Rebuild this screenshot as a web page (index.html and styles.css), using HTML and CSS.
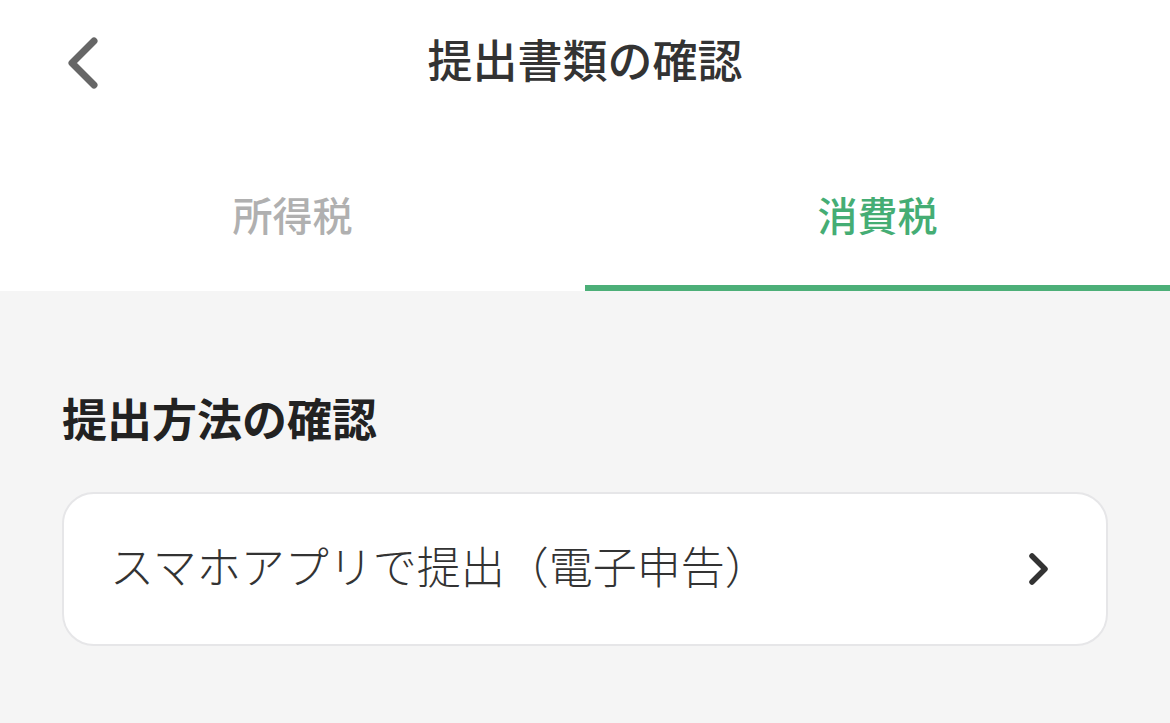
FILE: index.html
```html
<!DOCTYPE html>
<html lang="ja">
<head>
<meta charset="utf-8">
<link rel="stylesheet" href="styles.css">
</head>
<body>
<div class="page">
  <header class="topbar">
    <button class="back" aria-label="戻る">
      <svg width="40" height="60" viewBox="0 0 40 60"><path d="M30 8 L8 30 L30 52" fill="none" stroke="#666" stroke-width="7" stroke-linecap="round" stroke-linejoin="round"/></svg>
    </button>
    <h1 class="title">提出書類の確認</h1>
  </header>
  <nav class="tabs">
    <div class="tab">所得税</div>
    <div class="tab active">消費税</div>
  </nav>
  <main class="content">
    <h2 class="section-title">提出方法の確認</h2>
    <div class="card">
      <span class="card-text">スマホアプリで提出（電子申告）</span>
      <svg class="chev" width="24" height="36" viewBox="0 0 24 36"><path d="M5 5 L18 18 L5 31" fill="none" stroke="#333" stroke-width="5.5" stroke-linecap="round" stroke-linejoin="round"/></svg>
    </div>
  </main>
</div>
</body>
</html>
```
FILE: styles.css
```css
* { box-sizing: border-box; }
html, body { margin: 0; padding: 0; }
body {
  font-family: "Noto Sans CJK JP", "Noto Sans", sans-serif;
  background: #f5f5f5;
  width: 1170px;
  height: 723px;
  overflow: hidden;
}
.page { display: flex; flex-direction: column; height: 723px; }
.topbar {
  height: 122px;
  background: #fff;
  display: flex;
  align-items: center;
  justify-content: center;
  position: relative;
}
.back {
  position: absolute;
  left: 64px;
  top: 33px;
  border: 0;
  background: none;
  padding: 0;
  width: 40px;
  height: 60px;
}
.back svg { display: block; }
.title {
  margin: 0;
  margin-top: -6px;
  font-size: 45px;
  font-weight: 500;
  color: #333;
  letter-spacing: 0;
}
.tabs {
  display: flex;
  background: #fff;
  height: 169px;
}
.tab {
  flex: 1;
  display: flex;
  align-items: flex-start;
  justify-content: center;
  padding-top: 66px;
  font-size: 40px;
  font-weight: 500;
  color: #b0b0b0;
  line-height: 52px;
  border-bottom: 6px solid transparent;
}
.tab.active {
  color: #45ad74;
  border-bottom-color: #4caf78;
}
.content {
  padding: 0 62px;
}
.section-title {
  margin: 0;
  padding-top: 97px;
  font-size: 45px;
  font-weight: 700;
  color: #222;
  line-height: 60px;
}
.card {
  margin-top: 44px;
  height: 154px;
  background: #fff;
  border: 2px solid #e6e6e8;
  border-radius: 32px;
  display: flex;
  align-items: center;
  justify-content: space-between;
  padding: 0 55px 0 46px;
}
.card-text {
  font-size: 44px;
  color: #333;
  font-weight: 300;
  margin-bottom: 8px;
}
.chev { display: block; }
```
